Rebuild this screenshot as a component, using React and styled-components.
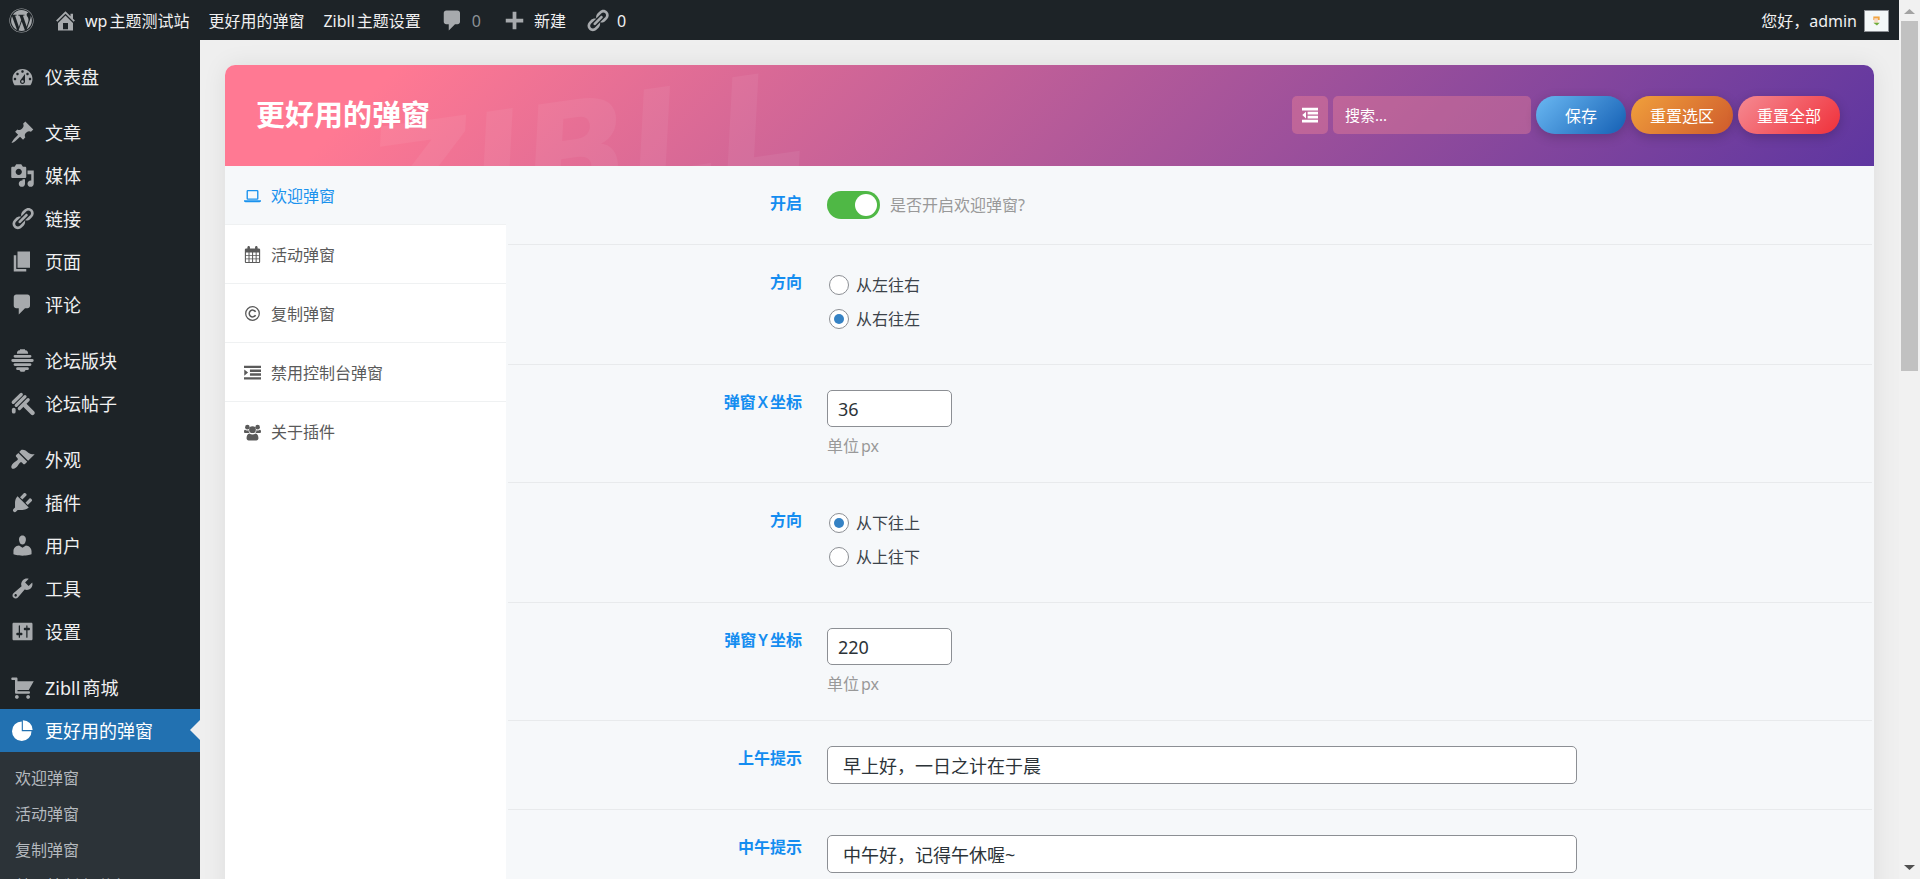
import React from 'react';
import styled, { createGlobalStyle, css } from 'styled-components';
import { FaWordpress } from 'react-icons/fa';

const GlobalStyle = createGlobalStyle`
  * {
    box-sizing: border-box;
  }
  body {
    margin: 0;
    background: #efefef;
    font-family: 'Noto Sans', 'Noto Sans CJK SC', sans-serif;
    font-size: 16px;
    text-autospace: normal;
  }
  button,
  input {
    font-family: inherit;
    margin: 0;
  }
  a {
    text-decoration: none;
  }
`

const Screen = styled.div`
  display: flex;
  height: 100vh;
  overflow: hidden;
`

const Page = styled.div`
  flex: 1;
  min-width: 0;
  display: flex;
  flex-direction: column;
`

/* admin bar */

const AdminBar = styled.header`
  flex: none;
  height: 40px;
  padding: 1px 10px 0 9px;
  display: flex;
  align-items: center;
  background: #1d2327;
`

const BarLink = styled.a`
  display: flex;
  align-items: center;
  gap: 7px;
  margin-left: ${props => props.$space || 19}px;
  line-height: 38px;
  white-space: nowrap;
  color: ${props => (props.$muted ? '#8c9196' : '#f0f0f1')};
  svg {
    flex: none;
    fill: #a7aaad;
  }
`

const Logo = styled.a`
  display: flex;
  color: #a7aaad;
`

const Account = styled(BarLink)`
  margin-left: auto;
`

const Avatar = styled.svg`
  border: 1px solid #8c8f94;
  background: #f4f8f8;
`

/* side menu */

const Body = styled.div`
  flex: 1;
  min-height: 0;
  display: flex;
`

const SideMenu = styled.nav`
  flex: none;
  width: 200px;
  padding-top: 15px;
  background: #1d2327;
`

const MenuGroup = styled.div`
  margin-bottom: 13px;
`

const MenuItem = styled.a`
  position: relative;
  height: 43px;
  padding-left: 10px;
  display: flex;
  align-items: center;
  gap: 10px;
  font-size: 18px;
  line-height: 24px;
  white-space: nowrap;
  color: #f0f0f1;
  svg {
    fill: #a7aaad;
  }
  ${props => props.$active && css`
    color: #fff;
    background: #2271b1;
    svg {
      fill: #fff;
    }
    &::after {
      content: '';
      position: absolute;
      right: 0;
      top: 11px;
      border: 10px solid transparent;
      border-right-color: #efefef;
      border-left-width: 0;
    }
  `}
`

const SubMenu = styled.div`
  padding: 8px 0;
  background: #2c3338;
`

const SubLink = styled.a`
  display: block;
  padding-left: 15px;
  line-height: 36px;
  white-space: nowrap;
  color: #b4b9be;
`

/* options card */

const Content = styled.main`
  flex: 1;
  min-width: 0;
  padding: 25px 25px 0;
`

const Card = styled.div`
  display: flex;
  flex-direction: column;
  min-height: 100%;
  border-radius: 10px 10px 0 0;
  background: #f6f8fa;
  box-shadow: 0 0 25px rgba(0, 0, 0, 0.08);
`

const CardHeader = styled.div`
  position: relative;
  overflow: hidden;
  height: 101px;
  padding: 0 34px 2px 31px;
  display: flex;
  align-items: center;
  justify-content: space-between;
  border-radius: 10px 10px 0 0;
  background: linear-gradient(135deg, #ff7993 10%, #5e36a0);
`

const Watermark = styled.span`
  position: absolute;
  left: 144px;
  top: 12px;
  font-family: 'DejaVu Sans', sans-serif;
  font-size: 140px;
  font-weight: 700;
  font-style: italic;
  line-height: 150px;
  color: rgba(255, 255, 255, 0.06);
  transform: rotate(-8deg);
`

const Title = styled.h1`
  position: relative;
  margin: 0;
  font-size: 29px;
  line-height: 40px;
  font-weight: 700;
  color: #fff;
`

const Actions = styled.form`
  display: flex;
  align-items: center;
  gap: 5px;
`

const ExpandButton = styled.button`
  width: 36px;
  height: 38px;
  padding: 0;
  display: flex;
  align-items: center;
  justify-content: center;
  border: 0;
  border-radius: 5px;
  background: rgba(255, 140, 150, 0.35);
  svg {
    fill: #fff;
  }
`

const Search = styled.input`
  width: 198px;
  height: 38px;
  padding: 0 12px;
  border: 0;
  border-radius: 5px;
  font-size: 15px;
  color: #fff;
  background: rgba(255, 140, 150, 0.35);
  &::placeholder {
    color: #fff;
    opacity: 1;
  }
`

const Pill = styled.button`
  min-width: 90px;
  height: 38px;
  padding: 0 19px;
  border: 0;
  border-radius: 19px;
  font-size: 16px;
  color: #fff;
  background: linear-gradient(135deg, ${props => props.$from}, ${props => props.$to});
  box-shadow: 0 3px 12px rgba(0, 0, 0, 0.2);
`

const CardBody = styled.div`
  flex: 1;
  display: flex;
`

const Tabs = styled.nav`
  flex: none;
  width: 281px;
  background: #fff;
`

const Tab = styled.a`
  height: 59px;
  padding: 1px 0 0 19px;
  display: flex;
  align-items: center;
  gap: 10px;
  line-height: 24px;
  border-bottom: ${props => (props.$last ? 0 : 1)}px solid #eff1f2;
  color: ${props => (props.$active ? '#1a92ee' : '#5a5a5a')};
  background: ${props => (props.$active ? '#f6f8fa' : '#fff')};
  svg {
    fill: currentColor;
  }
`

const Fields = styled.div`
  flex: 1;
  min-width: 0;
  padding: 0 2px;
`

const Field = styled.div`
  display: grid;
  grid-template-columns: 294px 1fr;
  column-gap: 25px;
  padding: 25px 0;
  border-bottom: 1px solid #e8eaec;
`

const FieldTitle = styled.label`
  font-weight: 600;
  line-height: 25px;
  text-align: right;
  color: #148df0;
`

const Help = styled.div`
  line-height: 22px;
  color: #999;
`

const SwitchRow = styled.div`
  height: 28px;
  display: flex;
  align-items: center;
  gap: 10px;
`

const Switch = styled.input`
  appearance: none;
  width: 53px;
  height: 28px;
  padding: 3px;
  display: flex;
  justify-content: flex-end;
  border-radius: 14px;
  background: #4fb845;
  &::before {
    content: '';
    width: 22px;
    height: 22px;
    border-radius: 50%;
    background: #fff;
  }
`

const RadioList = styled.div`
  display: flex;
  flex-direction: column;
  gap: 4px;
  padding: 0 2px 5px;
`

const RadioLabel = styled.label`
  display: flex;
  align-items: center;
  gap: 7px;
  line-height: 30px;
  color: #3c434a;
`

const Radio = styled.input`
  appearance: none;
  width: 20px;
  height: 20px;
  display: flex;
  align-items: center;
  justify-content: center;
  border: 1px solid #8c8f94;
  border-radius: 50%;
  background: #fff;
  &:checked::before {
    content: '';
    width: 10px;
    height: 10px;
    border-radius: 50%;
    background: #3582c4;
  }
`

const NumberBox = styled.div`
  display: flex;
  flex-direction: column;
  align-items: flex-start;
  gap: 8px;
`

const TextInput = styled.input`
  width: ${props => (props.$small ? 125 : 750)}px;
  max-width: 100%;
  height: ${props => (props.$small ? 37 : 38)}px;
  padding: 0 ${props => (props.$small ? 10 : 15)}px;
  border: 1px solid #8c8f94;
  border-radius: 5px;
  font-size: 18px;
  color: #2c3338;
  background: #fff;
`

/* window scrollbar */

const Scrollbar = styled.div`
  flex: none;
  width: 21px;
  padding: 9px 2px;
  display: flex;
  flex-direction: column;
  align-items: center;
  background: #f1f1f1;
`

const Thumb = styled.div`
  width: 17px;
  height: 350px;
  margin: 7px 0 auto;
  background: #c1c1c1;
`

const icons = {
  home: <path d="M16 8.5l1.53 1.53-1.06 1.06L10 4.6l-6.47 6.47-1.06-1.06L10 2.5l4 4v-2h2v4zm-6-2.46l6 5.99V18H4v-5.97zM12 17v-5H8v5h4z" />,
  comment: <path d="M5 2h9c1.1 0 2 .9 2 2v7c0 1.1-.9 2-2 2h-2l-5 5v-5H5c-1.1 0-2-.9-2-2V4c0-1.1.9-2 2-2z" />,
  plus: <path d="M17 8.5v3h-5.5V17h-3v-5.5H3v-3h5.5V3h3v5.5z" />,
  link: <path d="M17.74 2.76c1.68 1.69 1.68 4.41 0 6.1l-1.53 1.52c-1.12 1.12-2.7 1.47-4.14 1.09l2.62-2.61.76-.77.76-.76c.84-.84.84-2.2 0-3.04-.84-.85-2.2-.85-3.04 0l-.77.76-3.38 3.38c-.37-1.44-.02-3.02 1.1-4.14l1.52-1.53c1.69-1.68 4.42-1.68 6.1 0zM8.59 13.43l5.34-5.34c.42-.42.42-1.1 0-1.52-.44-.43-1.13-.39-1.53 0l-5.33 5.34c-.42.42-.42 1.1 0 1.52.44.43 1.13.39 1.52 0zm-.76 2.29l4.14-4.15c.38 1.44.03 3.02-1.09 4.14l-1.52 1.53c-1.69 1.68-4.41 1.68-6.1 0-1.68-1.68-1.68-4.42 0-6.1l1.53-1.52c1.12-1.12 2.7-1.47 4.14-1.1l-4.14 4.15c-.85.84-.85 2.2 0 3.05.84.84 2.2.84 3.04 0z" />,
  dashboard: <path fillRule="evenodd" d="M3.76 17h12.48c1.1-1.37 1.76-3.11 1.76-5 0-4.42-3.58-8-8-8s-8 3.58-8 8c0 1.89.66 3.63 1.76 5zM10 5c.55 0 1 .45 1 1s-.45 1-1 1-1-.45-1-1 .45-1 1-1zM6 7c.55 0 1 .45 1 1s-.45 1-1 1-1-.45-1-1 .45-1 1-1zm8 0c.55 0 1 .45 1 1s-.45 1-1 1-1-.45-1-1 .45-1 1-1zm-5.37 5.55L12 8v6c0 1.1-.9 2-2 2s-2-.9-2-2c0-.57.24-1.08.63-1.45zM4 11c.55 0 1 .45 1 1s-.45 1-1 1-1-.45-1-1 .45-1 1-1zm12 0c.55 0 1 .45 1 1s-.45 1-1 1-1-.45-1-1 .45-1 1-1zm-5 3c0-.55-.45-1-1-1s-1 .45-1 1 .45 1 1 1 1-.45 1-1z" />,
  pin: <path d="M10.44 3.02l1.82-1.82 6.36 6.35-1.83 1.82c-1.05-.68-2.48-.57-3.41.36l-.75.75c-.92.93-1.04 2.35-.35 3.41l-1.83 1.82-2.41-2.41-2.8 2.79c-.42.42-3.38 2.71-3.8 2.29s1.86-3.39 2.28-3.81l2.79-2.79L4.1 9.36l1.83-1.82c1.05.69 2.48.57 3.4-.36l.75-.75c.93-.92 1.05-2.35.36-3.41z" />,
  media: <path fillRule="evenodd" d="M13 11V4c0-.55-.45-1-1-1h-1.67L9 1H5L3.67 3H2c-.55 0-1 .45-1 1v7c0 .55.45 1 1 1h10c.55 0 1-.45 1-1zM7 4.5c1.38 0 2.5 1.12 2.5 2.5S8.38 9.5 7 9.5 4.5 8.38 4.5 7 5.62 4.5 7 4.5zM14 6h5v10.5c0 1.38-1.12 2.5-2.5 2.5S14 17.88 14 16.5s1.12-2.5 2.5-2.5c.17 0 .34.02.5.05V9h-3V6zm-4 8.05V13h2v3.5c0 1.38-1.12 2.5-2.5 2.5S7 17.88 7 16.5 8.12 14 9.5 14c.17 0 .34.02.5.05z" />,
  page: <path d="M6 15V2h10v13H6zm-1 1h8v2H3V5h2v11z" />,
  hive: <path d="M8 1h4v1H8zM5.500 4.500c0-1.700.8-2.700 2-2.700h5c1.200 0 2 1 2 2.700zM4 5.500h12a1 1 0 0 1 0 2.300H4a1 1 0 0 1 0-2.300zM2.200 8.800h15.600a1 1 0 0 1 0 2.300H2.200a1 1 0 0 1 0-2.300zM4 12.100h12a1 1 0 0 1 0 2.300H4a1 1 0 0 1 0-2.300zM6 15.400h8a1 1 0 0 1 0 2.200h-1.500L11.500 19h-3l-1-1.400H6a1 1 0 0 1 0-2.200z" />,
  dipper: (
    <g fill="none" stroke="#a7aaad" strokeLinecap="round">
      <path strokeWidth="2.600" d="M2.600 9L9 2.800M5 11.500l7-7M7.500 14l7-7" />
      <path strokeWidth="3.400" d="M12 11.500l6 6" />
      <path strokeWidth="3" d="M3 14.800v1.700" />
    </g>
  ),
  brush: <path d="M14.48 11.06L7.41 3.99l1.5-1.5c.5-.56 2.3-.47 3.51.32 1.21.8 1.43 1.28 2.91 2.1 1.18.64 2.45 1.26 4.45.85zm-.71.71L6.7 4.7 4.93 6.47c-.39.39-.39 1.02 0 1.41l1.06 1.06c.39.39.39 1.03 0 1.42-.6.6-1.43 1.11-2.21 1.69-.35.26-.7.53-1.01.84C1.43 14.23.4 16.08 1.4 17.07c.99 1 2.84-.03 4.18-1.36.31-.31.58-.66.85-1.02.57-.78 1.08-1.61 1.69-2.21.39-.39 1.02-.39 1.41 0l1.06 1.06c.39.39 1.02.39 1.41 0z" />,
  plug: <path d="M13.11 4.36L9.87 7.6 8 5.73l3.24-3.24c.35-.34 1.05-.2 1.56.32.52.51.66 1.21.31 1.55zm-8 1.77l.91-1.12 9.01 9.01-1.19.84c-.71.71-2.63 1.16-3.82 1.16H6.14L4.9 17.26c-.59.59-1.54.59-2.12 0-.59-.58-.59-1.53 0-2.12l1.24-1.24v-3.88c0-1.13.4-3.19 1.09-3.89zm7.26 3.97l3.24-3.24c.34-.35 1.04-.21 1.55.31.52.51.66 1.21.31 1.55l-3.24 3.25z" />,
  user: <path d="M10 9.25c-2.27 0-2.73-3.44-2.73-3.44C7 4.02 7.82 2 9.97 2c2.16 0 2.98 2.02 2.71 3.81 0 0-.41 3.44-2.68 3.44zm0 2.57L12.720 10c2.39 0 4.520 2.330 4.520 4.530v2.490s-3.650 1.130-7.240 1.130c-3.650 0-7.240-1.130-7.240-1.130v-2.490c0-2.250 1.940-4.480 4.470-4.480z" />,
  wrench: <path fillRule="evenodd" d="M16.68 9.77c-1.34 1.34-3.3 1.67-4.95.99l-5.41 6.52c-.99.99-2.59.99-3.58 0s-.99-2.59 0-3.57l6.52-5.42c-.68-1.65-.35-3.61.99-4.95 1.28-1.28 3.12-1.62 4.72-1.06l-2.89 2.89 2.82 2.82 2.86-2.87c.53 1.58.18 3.39-1.08 4.65zM3.81 16.21c.4.39 1.04.39 1.43 0 .4-.4.4-1.04 0-1.43-.39-.4-1.03-.4-1.43 0-.39.39-.39 1.03 0 1.43z" />,
  settings: <path fillRule="evenodd" d="M18 16V4c0-.55-.45-1-1-1H3c-.55 0-1 .45-1 1v12c0 .55.45 1 1 1h14c.55 0 1-.45 1-1zM8 11h1c.55 0 1 .45 1 1s-.45 1-1 1H8v1.500c0 .28-.22.5-.5.5s-.5-.22-.5-.5V13H6c-.55 0-1-.45-1-1s.45-1 1-1h1V5.500c0-.28.22-.5.5-.5s.5.22.5.5V11zm5-2h-1c-.55 0-1-.45-1-1s.45-1 1-1h1V5.500c0-.28.22-.5.5-.5s.5.22.5.5V7h1c.55 0 1 .45 1 1s-.45 1-1 1h-1v5.500c0 .28-.22.5-.5.5s-.5-.22-.5-.5V9z" />,
  cart: <path d="M6 13h9c.55 0 1 .45 1 1s-.45 1-1 1H5c-.55 0-1-.45-1-1V4H2c-.55 0-1-.45-1-1s.45-1 1-1h3c.55 0 1 .45 1 1v2h13l-4 7H6v1zm-.5 3c.83 0 1.500.67 1.500 1.500S6.330 19 5.500 19 4 18.330 4 17.500 4.670 16 5.500 16zm9 0c.83 0 1.500.67 1.500 1.500s-.67 1.500-1.500 1.500-1.500-.67-1.500-1.500.67-1.500 1.500-1.500z" />,
  pie: <path d="M10.300 1.800a7.800 7.800 0 0 1 7.800 7.800h-7.800zM9.400 2.800v7.700h7.800A7.800 7.800 0 1 1 9.400 2.800z" />,
  laptop: <path fillRule="evenodd" d="M4.500 3.500h11A1.500 1.500 0 0 1 17 5v8.500a1.500 1.500 0 0 1-1.500 1.500h-11A1.500 1.500 0 0 1 3 13.500V5a1.500 1.500 0 0 1 1.500-1.500zm.1 1.500v8.500h10.800V5zM0 15.500h20v1c0 .8-.7 1.300-1.700 1.300H1.700C.7 17.800 0 17.300 0 16.500z" />,
  calendar: <path fillRule="evenodd" d="M1 4.500C1 3.700 1.700 3 2.500 3H4V1.500C4 .7 4.600 0 5.500 0S7 .7 7 1.500V3h6V1.500c0-.8.6-1.500 1.500-1.500S16 .7 16 1.500V3h1.500c.8 0 1.500.7 1.500 1.500v14c0 .8-.7 1.500-1.500 1.500h-15C1.700 20 1 19.300 1 18.500zM2.300 7.500v3h3v-3zm4.200 0v3h3v-3zm4.200 0v3h3v-3zm4.200 0v3h2.800v-3zM2.300 11.600v3h3v-3zm4.200 0v3h3v-3zm4.200 0v3h3v-3zm4.200 0v3h2.800v-3zM2.300 15.700v3h3v-3zm4.200 0v3h3v-3zm4.200 0v3h3v-3zm4.200 0v3h2.800v-3z" />,
  copyright: (
    <g fill="none" stroke="currentColor" strokeWidth="1.500">
      <circle cx="10" cy="10" r="8" />
      <path strokeWidth="1.800" d="M13.600 8A4 4 0 1 0 13.600 12" />
    </g>
  ),
  indent: <path d="M0 2h20v2.800H0zM7 6.500h13v2.800H7zM7 11h13v2.800H7zM0 15.500h20v2.800H0zM.3 6.500l4.500 3.600-4.500 3.600z" />,
  outdent: <path d="M0 1h20v3.500H0zM7 6h13v3.500H7zM7 11h13v3.500H7zM0 16h20v3.500H0zM5 5.800v8.500L.3 10z" />,
  users: (
    <g>
      <circle cx="4" cy="3.700" r="2.700" />
      <circle cx="16" cy="3.700" r="2.700" />
      <circle cx="10" cy="6.700" r="4" />
      <path d="M1.800 7c1.500.7 2.700.7 3.600.4 0 1.500.5 2.500 1.300 3.300H1.500C.6 10.700 0 10.200 0 9.200 0 7.500.6 6.500 1.800 7zM18.200 7c-1.500.7-2.700.7-3.600.4 0 1.500-.5 2.500-1.300 3.300h5.200c.9 0 1.500-.5 1.500-1.500 0-1.700-.6-2.700-1.800-2.200zM6.300 11.200c2.300 1.600 5.100 1.600 7.400 0 2 .1 3.300 2.500 3.300 5.600 0 1.500-1 2.500-2.500 2.500h-9C4 19.300 3 18.300 3 16.800c0-3.100 1.300-5.500 3.300-5.600z" />
    </g>
  ),
};

const Icon = ({ name, size = 25 }) => (
  <svg width={size} height={size} viewBox="0 0 20 20" aria-hidden="true">
    {icons[name]}
  </svg>
);

const menu = [
  [['dashboard', '仪表盘']],
  [['pin', '文章'], ['media', '媒体'], ['link', '链接'], ['page', '页面'], ['comment', '评论']],
  [['hive', '论坛版块'], ['dipper', '论坛帖子']],
  [['brush', '外观'], ['plug', '插件'], ['user', '用户'], ['wrench', '工具'], ['settings', '设置']],
  [['cart', 'Zibll商城'], ['pie', '更好用的弹窗']],
];

const tabs = [
  ['laptop', '欢迎弹窗'],
  ['calendar', '活动弹窗'],
  ['copyright', '复制弹窗'],
  ['indent', '禁用控制台弹窗'],
  ['users', '关于插件'],
];

const RadioField = ({ name, options, checked }) => (
  <Field role="radiogroup" aria-labelledby={name}>
    <FieldTitle as="div" id={name}>方向</FieldTitle>
    <RadioList>
      {options.map(option => (
        <RadioLabel key={option}>
          <Radio type="radio" name={name} defaultChecked={option === checked} />
          {option}
        </RadioLabel>
      ))}
    </RadioList>
  </Field>
);

const NumberField = ({ id, title, value }) => (
  <Field>
    <FieldTitle htmlFor={id}>{title}</FieldTitle>
    <NumberBox>
      <TextInput $small id={id} type="text" inputMode="numeric" defaultValue={value} />
      <Help>单位px</Help>
    </NumberBox>
  </Field>
);

const TextField = ({ id, title, value }) => (
  <Field>
    <FieldTitle htmlFor={id}>{title}</FieldTitle>
    <TextInput id={id} type="text" defaultValue={value} />
  </Field>
);

function App() {
  return (
    <Screen>
      <GlobalStyle />
      <Page>
        <AdminBar>
          <Logo href="#" aria-label="WordPress"><FaWordpress size={25} /></Logo>
          <BarLink href="#"><Icon name="home" />wp主题测试站</BarLink>
          <BarLink href="#">更好用的弹窗</BarLink>
          <BarLink href="#">Zibll主题设置</BarLink>
          <BarLink href="#" $muted><Icon name="comment" />0</BarLink>
          <BarLink href="#" $space={21}><Icon name="plus" />新建</BarLink>
          <BarLink href="#"><Icon name="link" />0</BarLink>
          <Account href="#">
            您好，admin
            <Avatar width="25" height="22" viewBox="0 0 25 22">
              <path fill="#f2a541" d="M9 6h7v4H9z" />
              <path fill="#f7d9c4" d="M10 8h4v5h-4z" />
              <path fill="#6fae3c" d="M9 13h7l-3 3z" />
            </Avatar>
          </Account>
        </AdminBar>
        <Body>
          <SideMenu>
            {menu.map((group, i) => (
              <MenuGroup key={i}>
                {group.map(([icon, text]) => (
                  <MenuItem href="#" key={text} $active={icon === 'pie'}>
                    <Icon name={icon} />
                    {text}
                  </MenuItem>
                ))}
                {i === menu.length - 1 && (
                  <SubMenu>
                    {tabs.map(([icon, text]) => (
                      <SubLink href="#" key={icon}>{text}</SubLink>
                    ))}
                  </SubMenu>
                )}
              </MenuGroup>
            ))}
          </SideMenu>
          <Content>
            <Card>
              <CardHeader>
                <Watermark aria-hidden="true">ZIBLL</Watermark>
                <Title>更好用的弹窗</Title>
                <Actions>
                  <ExpandButton type="button" aria-label="展开"><Icon name="outdent" size={16} /></ExpandButton>
                  <Search type="text" placeholder="搜索..." aria-label="搜索" />
                  <Pill type="button" $from="#6ab8f2" $to="#1560b4">保存</Pill>
                  <Pill type="button" $from="#f0a03c" $to="#cf5a2c">重置选区</Pill>
                  <Pill type="button" $from="#f58a92" $to="#f0303a">重置全部</Pill>
                </Actions>
              </CardHeader>
              <CardBody>
                <Tabs>
                  {tabs.map(([icon, text], i) => (
                    <Tab href="#" key={icon} $active={i === 0} $last={i === tabs.length - 1}>
                      <Icon name={icon} size={17} />
                      {text}
                    </Tab>
                  ))}
                </Tabs>
                <Fields>
                  <Field>
                    <FieldTitle htmlFor="enable">开启</FieldTitle>
                    <SwitchRow>
                      <Switch type="checkbox" id="enable" defaultChecked />
                      <Help>是否开启欢迎弹窗?</Help>
                    </SwitchRow>
                  </Field>
                  <RadioField name="x-side" options={['从左往右', '从右往左']} checked="从右往左" />
                  <NumberField id="x-pos" title="弹窗X坐标" value="36" />
                  <RadioField name="y-side" options={['从下往上', '从上往下']} checked="从下往上" />
                  <NumberField id="y-pos" title="弹窗Y坐标" value="220" />
                  <TextField id="morning" title="上午提示" value="早上好，一日之计在于晨" />
                  <TextField id="noon" title="中午提示" value="中午好，记得午休喔~" />
                </Fields>
              </CardBody>
            </Card>
          </Content>
        </Body>
      </Page>
      <Scrollbar aria-hidden="true">
        <svg width="11" height="5" viewBox="0 0 11 5"><path fill="#a3a3a3" d="M0 5L5.500 0 11 5z" /></svg>
        <Thumb />
        <svg width="11" height="5" viewBox="0 0 11 5"><path fill="#505050" d="M0 0h11L5.500 5z" /></svg>
      </Scrollbar>
    </Screen>
  );
}

export default App;
